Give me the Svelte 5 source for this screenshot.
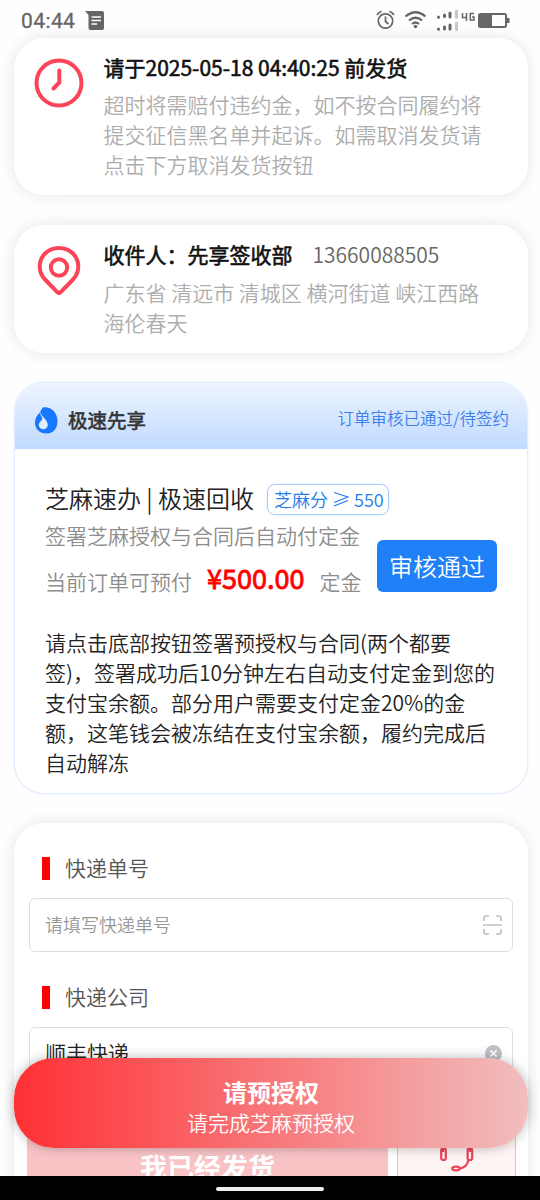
<script>
  const notice = ['超时将需赔付违约金，如不按合同履约将', '提交征信黑名单并起诉。如需取消发货请', '点击下方取消发货按钮'];
  const address = ['广东省 清远市 清城区 横河街道 峡江西路', '海伦春天'];
  const tips = ['请点击底部按钮签署预授权与合同(两个都要', '签)，签署成功后10分钟左右自动支付定金到您的', '支付宝余额。部分用户需要支付定金20%的金', '额，这笔钱会被冻结在支付宝余额，履约完成后', '自动解冻'];
</script>

<div class="screen">
  <header class="status">
    <span class="time">04:44</span>
    <svg class="msg" width="19" height="19" viewBox="0 0 19 19"><path d="M0 0H17Q19 0 19 2V17Q19 19 17 19H5.500Q3.500 19 3.500 17V4Z" fill="#666" /><path d="M6.500 6H16M6.500 9.500H16M6.500 13H12" stroke="#fff" stroke-width="1.600" /></svg>
    <div class="sys">
      <svg width="134" height="24" viewBox="0 0 134 24" fill="none" stroke="#666" stroke-width="1.700">
        <circle cx="9.500" cy="13" r="7.200" /><path d="M9.500 8.500V13.500L12.500 16M1 7Q2.500 4.500 5.500 3.300M18 7Q16.500 4.500 13.500 3.300" />
        <path d="M29.500 8.500Q39.500 0 49.500 8.500M33 12.500Q39.500 7 46 12.500M36 16Q39.500 13 43 16" stroke-width="2.200" /><circle cx="39.500" cy="18.500" r="1.700" fill="#666" stroke="none" />
        <g stroke-width="3" stroke-linecap="round"><path d="M62.500 9v.3M68.500 7v1.500M74 5v4M62.500 21v.3M68.500 19v2M74 17v4" /><path d="M80.500 3v6.500M80.500 15v6.500" stroke="#c8c8c8" /></g>
        <path d="M86.500 5V9.500H91M90.500 5V13M98 5.500H94.300V12H98V9H96" stroke-width="1.500" />
        <rect x="103" y="6" width="27" height="13" rx="1.500" stroke-width="2" /><path d="M104 7H116V18H104Z" fill="#666" stroke="none" /><path d="M132 10v5" stroke-width="3" />
      </svg>
    </div>
  </header>

  <main>
    <section class="card info notice">
      <svg class="ico" width="52" height="52" viewBox="0 0 52 52" fill="none" stroke="#fc4459" stroke-width="4"><circle cx="26" cy="26" r="22.500" /><path d="M26.300 13.500V25.500L20.500 31.500" stroke-linecap="round" stroke-linejoin="round" /></svg>
      <div><h2>请于2025-05-18 04:40:25 前发货</h2>{#each notice as line}<p>{line}</p>{/each}</div>
    </section>

    <section class="card info receiver">
      <svg class="ico" width="52" height="52" viewBox="0 0 52 52" fill="none" stroke="#fc4459" stroke-width="4"><path d="M24.500 49.300 12.500 37C5 29.500 4.800 18 12 10.500C19.500 3 32.500 3 40 10.500C47.200 18 47 29.500 39.500 37L27.500 49.300Q26 50.600 24.500 49.300Z" /><circle cx="26" cy="24.500" r="8.200" /></svg>
      <div><h2>收件人：先享签收部<span>13660088505</span></h2>{#each address as line}<p>{line}</p>{/each}</div>
    </section>

    <section class="card credit">
      <div class="credit-head">
        <svg width="23" height="27" viewBox="0 0 23 27"><path d="M7.500 .8C14-1.500 22.500 4.500 22.500 14C22.500 22 18 26.500 11.500 26.500C4.500 26.500 0 22 0 15.500C0 11.500 2 8 4.500 6Z" fill="#1677ff" /><path d="M5.500 4.500C5.500 9.500 12.800 12.500 12.800 17.800A4.500 4.500 0 0 1 3.800 17.800C3.800 14.500 8 13.500 7 10.500C6.500 9 4.700 7.500 5.500 4.500Z" fill="#e2edff" /></svg>
        <b>极速先享</b><span>订单审核已通过/待签约</span>
      </div>
      <div class="credit-body">
        <div class="name"><span>芝麻速办 | 极速回收</span><em>芝麻分 <svg width="16" height="16" viewBox="0 0 16 16" fill="none" stroke="currentColor" stroke-width="1.200"><path d="M1 1.500 15 6 1 11.500M1 15 15 9.500" /></svg> 550</em></div>
        <div class="pay">
          <div>
            <p>签署芝麻授权与合同后自动付定金</p>
            <p class="amount"><span>当前订单可预付</span><strong>¥500.00</strong><span>定金</span></p>
          </div>
          <button>审核通过</button>
        </div>
        <div class="tips">{#each tips as line}<p>{line}</p>{/each}</div>
      </div>
    </section>

    <section class="card form">
      <h3><span>快递单号</span></h3>
      <div class="field"><span class="hint">请填写快递单号</span>
        <svg width="19" height="20" viewBox="0 0 19 20" fill="none" stroke="#c0c1c5" stroke-width="1.700"><path d="M1 6V3Q1 1 3 1H6M13 1H16Q18 1 18 3V6M1 14V17Q1 19 3 19H6M13 19H16Q18 19 18 17V14M0 10H19" /></svg>
      </div>
      <h3><span>快递公司</span></h3>
      <div class="field company"><span>顺丰快递</span>
        <svg width="17" height="17" viewBox="0 0 17 17"><circle cx="8.500" cy="8.500" r="8.500" fill="#c0c1c7" /><path d="m5.300 5.300 6.400 6.400m0-6.400-6.400 6.400" stroke="#fff" stroke-width="1.700" /></svg>
      </div>
      <div class="actions">
        <div class="sent">我已经发货</div>
        <div class="service">
          <svg width="36" height="36" viewBox="0 0 36 36" fill="none" stroke="#f04358" stroke-width="2.200"><path d="M4 14V12C4 -4 31 -4 31 12V14" /><rect x="2.200" y="10.500" width="4.600" height="11.500" rx="2" /><rect x="28.600" y="10.500" width="4.600" height="11.500" rx="2" /><path d="M29.500 22C28 28.500 24 30.500 19.500 30.500" /><ellipse cx="17" cy="30.500" rx="3.800" ry="1.900" /></svg>
          <span>官方客服</span>
        </div>
      </div>
    </section>
  </main>

  <div class="auth"><b>请预授权</b><span>请完成芝麻预授权</span></div>
  <footer><i></i></footer>
</div>

<style>
  :global(body) { margin: 0; background: #fff; }
  .screen { position: relative; box-sizing: border-box; width: 540px; height: 1200px; overflow: hidden; background: #fefefe; font-family: "Noto Sans CJK SC", sans-serif; font-size: 21px; font-weight: 350; color: #222; }
  h2, h3, p { margin: 0; }
  p { line-height: 30px; white-space: nowrap; }
  svg { display: block; flex: none; }
  .status { display: flex; height: 38px; box-sizing: border-box; padding: 8px 30px 0 21px; color: #666; }
  .time { width: 64px; font: 400 21px/27px Roboto, sans-serif; letter-spacing: .4px; -webkit-text-stroke: .3px; }
  .msg { margin-top: 3px; }
  .sys { margin-left: auto; }
  main { display: flex; flex-direction: column; gap: 30px; padding: 0 12px 0 14px; }
  .card { box-sizing: border-box; background: #fff; border-radius: 30px; box-shadow: 0 0 15px rgba(0, 0, 0, .1); }
  .info { display: flex; gap: 19px; padding: 14px 19px; color: #adadad; }
  .info > div { margin-left: -.5px; }
  .notice { height: 157px; }
  .receiver { height: 128px; }
  .ico { margin-top: 5px; }
  .receiver .ico { margin-top: 4px; }
  h2 { height: 38px; line-height: 30px; font-size: 21px; font-weight: 400; -webkit-text-stroke: .6px; color: #111; white-space: nowrap; }
  .notice h2 { height: 37px; }
  h2 span { margin-left: 20px; font-weight: 350; -webkit-text-stroke: 0; color: #666; }
  .credit { height: 412px; margin-top: -1px; border: 1px solid #e2edfe; overflow: hidden; box-shadow: 0 0 2px #e0ecff; }
  .credit-head { display: flex; align-items: center; height: 66px; padding: 8px 18px 0 20px; box-sizing: border-box; background: linear-gradient(#edf4ff, #c0dafe); color: #333; }
  .credit-head b { margin: -1px 0 0 10px; font-size: 19.500px; font-weight: 400; -webkit-text-stroke: .6px; }
  .credit-head span { margin: -5px 0 0 auto; font-size: 16.500px; color: #3b80ea; }
  .credit-body { padding: 34px 30px 0; }
  .name { display: flex; align-items: center; height: 32px; font-size: 24px; white-space: nowrap; }
  .name > span { margin-top: -4px; }
  .name em { display: flex; align-items: center; gap: 5px; box-sizing: border-box; width: 122px; height: 31px; margin-left: 13px; padding: 0 5px 0 6px; border: 1px solid #a9cdfb; border-radius: 8px; font: 350 18px/29px "Noto Sans CJK SC", sans-serif; color: #257bed; box-shadow: 0 0 2px #c9dffc; }
  .pay { display: flex; justify-content: space-between; height: 112px; color: #8d8d8d; }
  .pay > div { padding-top: 5px; }
  .amount { display: flex; align-items: center; height: 30px; margin-top: 15px; }
  .amount strong { margin: -4px 15px 0; font-size: 27px; font-weight: 400; -webkit-text-stroke: .8px; color: #f00; }
  .amount span { margin-top: 1px; }
  button { width: 120px; height: 52px; margin-top: 25px; padding: 0; border: 0; border-radius: 6px; background: #2080f7; color: #fff; font: 350 24px/52px "Noto Sans CJK SC", sans-serif; }
  .form { height: 420px; margin-top: -1px; padding: 30px 15px; }
  h3 { display: flex; align-items: center; height: 30px; margin: 0 0 15px 13px; font-size: 21px; font-weight: 350; color: #555; }
  h3::before { content: ""; width: 8px; height: 23px; margin-right: 15px; background: #f00; }
  h3 span { margin-top: -2px; }
  .field { display: flex; align-items: center; justify-content: space-between; box-sizing: border-box; height: 54px; margin-bottom: 30px; padding: 0 10px 0 15px; border: 1px solid #dedede; border-radius: 6px; }
  .hint { margin-top: -3px; font-size: 18px; color: #999; }
  .company { margin-bottom: 41px; }
  .company span { margin-top: -4px; }
  .company svg { margin-top: -2px; }
  .actions { display: flex; gap: 9px; margin: 0 -3px 0 -2px; }
  .sent { width: 361px; height: 80px; background: #f9c3c6; color: #fff; font-size: 27px; font-weight: 700; line-height: 90px; text-align: center; }
  .service { display: flex; flex-direction: column; align-items: center; box-sizing: border-box; width: 119px; height: 80px; padding-top: 15px; border: 1px solid #f4b7bd; background: #fff4f4; font-size: 18px; color: #333; }
  .service span { margin-top: -2px; line-height: 26px; }
  .auth { position: absolute; left: 14px; right: 12px; top: 1058px; display: flex; flex-direction: column; align-items: center; box-sizing: border-box; height: 90px; padding-top: 18px; border-radius: 40px; background: linear-gradient(90deg, #ff3034, #f1bebe); box-shadow: 0 0 12px rgba(0, 0, 0, .28); color: #fff; }
  .auth b { font-size: 24px; font-weight: 700; line-height: 31px; }
  .auth span { line-height: 31px; }
  footer { position: absolute; inset: auto 0 0; display: flex; justify-content: center; height: 24px; background: #000; }
  footer i { width: 108px; height: 4px; margin-top: 11px; border-radius: 2px; background: #eee; }
</style>
